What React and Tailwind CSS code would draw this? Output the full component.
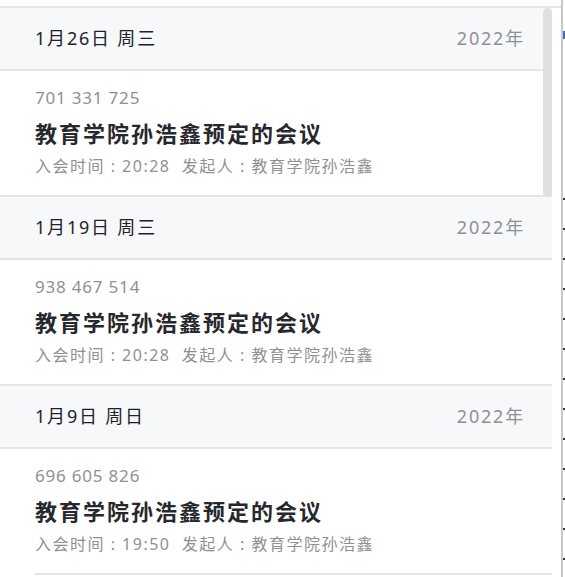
import React from 'react';

const FONT = { fontFamily: '"Noto Sans", "Noto Sans CJK SC", sans-serif' };

const MEETINGS = [
  { date: '1月26日 周三', year: '2022年', id: '701 331 725', title: '教育学院孙浩鑫预定的会议', time: '20:28', host: '教育学院孙浩鑫' },
  { date: '1月19日 周三', year: '2022年', id: '938 467 514', title: '教育学院孙浩鑫预定的会议', time: '20:28', host: '教育学院孙浩鑫' },
  { date: '1月9日 周日', year: '2022年', id: '696 605 826', title: '教育学院孙浩鑫预定的会议', time: '19:50', host: '教育学院孙浩鑫' },
];

export default function App() {
  return (
    <div className="w-[565px] h-[577px] bg-white overflow-hidden flex" style={FONT}>
      {/* Meeting list */}
      <div className="w-[561px] pt-[6px]">
        <div className="border-t-2 border-[#e4e5e9] relative">
          <div className="w-[552px]">
            {MEETINGS.map((m, i) => (
              <MeetingGroup key={m.id} meeting={m} last={i === MEETINGS.length - 1} />
            ))}
          </div>
          {/* Scrollbar thumb */}
          <div className="absolute top-0 left-[543px] w-[9px] h-[189px] rounded-full bg-[#dfe0e3]" />
        </div>
      </div>

      {/* Neighbouring pane edge */}
      <div className="w-[2px] bg-[#c9c9c9]" />
      <div className="w-[2px] relative">
        <div className="absolute top-[31px] left-0 w-[2px] h-[8px] bg-[#3b6fb6]" />
        <div className="flex flex-col gap-[28px] pt-[198px]">
          {Array.from({ length: 13 }).map((_, i) => (
            <div key={i} className="w-[2px] h-[2px] bg-[#333]" />
          ))}
        </div>
      </div>
    </div>
  );
}

function MeetingGroup({ meeting, last }) {
  return (
    <div>
      <div className="h-[63px] bg-[#f7f8fa] border-b-2 border-[#e4e5e9] flex items-center justify-between pl-[35px] pr-[27px]">
        <span className="text-[18px] tracking-[1.8px] text-[#1f2329]">{meeting.date}</span>
        <span className="text-[18px] tracking-[1.8px] text-[#8f9095]">{meeting.year}</span>
      </div>
      <div className={`h-[126px] flex flex-col ${last ? '' : 'border-b-2 border-[#e4e5e9]'}`}>
        <div className="pl-[35px] pt-[15px] flex-1">
          <div className="text-[17px] leading-[24px] tracking-[0.8px] text-[#8f9095]">{meeting.id}</div>
          <div className="mt-[8px] text-[22px] leading-[30px] font-bold tracking-[2px] text-[#26282c]">
            {meeting.title}
          </div>
          <div className="mt-[6px] text-[16px] leading-[24px] tracking-[1.5px] text-[#8f9095] whitespace-pre">
            {`入会时间 : ${meeting.time}  发起人 : ${meeting.host}`}
          </div>
        </div>
        {last && <div className="ml-[35px] h-[2px] bg-[#e4e5e9]" />}
      </div>
    </div>
  );
}
